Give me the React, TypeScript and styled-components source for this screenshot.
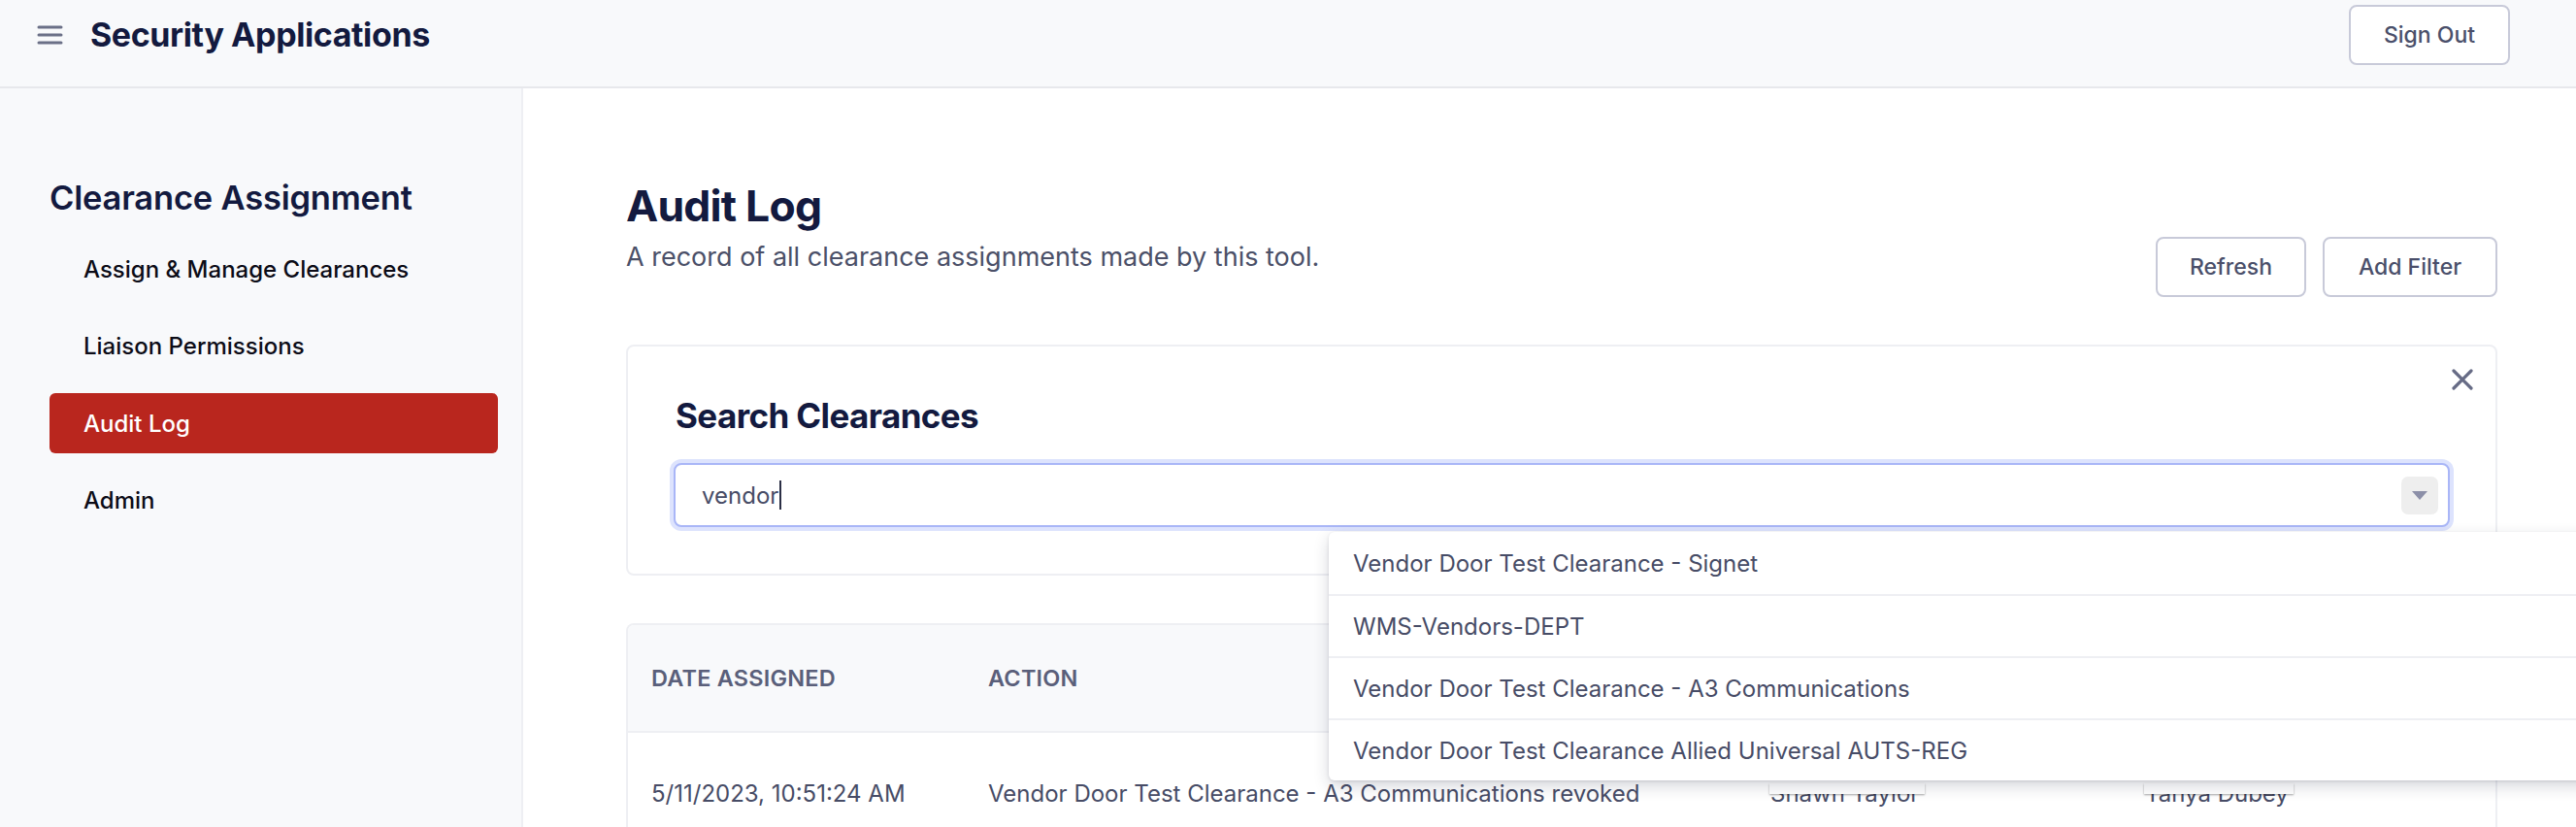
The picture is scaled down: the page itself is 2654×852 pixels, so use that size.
import React from "react";
import styled, { createGlobalStyle } from "styled-components";

const GlobalStyle = createGlobalStyle`
  html, body {
    margin: 0;
    padding: 0;
    overflow: hidden;
    background: #ffffff;
    font-family: Inter, "Noto Sans", Arial, sans-serif;
  }
  * { box-sizing: border-box; }
`;

const Page = styled.div`
  width: 2654px;
  height: 852px;
  display: flex;
  flex-direction: column;
  overflow: hidden;
`;

const TopBar = styled.header`
  height: 91px;
  flex: none;
  display: flex;
  align-items: flex-start;
  justify-content: space-between;
  padding: 5px 68px 0 37px;
  background: #f8f9fb;
  border-bottom: 2px solid #e7e8ec;
`;

const Brand = styled.div`
  height: 61px;
  display: flex;
  align-items: center;
  gap: 27px;
`;

const BrandTitle = styled.h1`
  margin: 0;
  font-size: 34px;
  font-weight: 700;
  letter-spacing: -0.4px;
  color: #131a3f;
`;

const OutlineButton = styled.button<{ $w: number }>`
  width: ${(p) => p.$w}px;
  height: 62px;
  background: #ffffff;
  border: 2px solid #c8cad9;
  border-radius: 8px;
  font-family: Inter, Arial, sans-serif;
  font-size: 23px;
  font-weight: 500;
  color: #4a4f6a;
  cursor: pointer;
`;

const Body = styled.div`
  flex: 1;
  display: flex;
  min-height: 0;
`;

const Sidebar = styled.aside`
  width: 539px;
  flex: none;
  background: #f8f9fb;
  border-right: 2px solid #eeeff3;
  padding: 91px 24px 0 51px;
`;

const SideTitle = styled.h2`
  margin: 0 0 21px 0;
  font-size: 34.5px;
  line-height: 43px;
  font-weight: 600;
  letter-spacing: -0.2px;
  color: #131a3f;
`;

const NavList = styled.nav`
  display: flex;
  flex-direction: column;
  gap: 17.5px;
`;

const NavItem = styled.div<{ $active?: boolean }>`
  height: 62px;
  display: flex;
  align-items: center;
  padding-left: 35px;
  border-radius: 6px;
  font-size: 24px;
  font-weight: 500;
  color: ${(p) => (p.$active ? "#ffffff" : "#0c0c17")};
  background: ${(p) => (p.$active ? "#b9261e" : "transparent")};
`;

const Main = styled.main`
  flex: 1;
  padding: 94px 81px 0 106px;
  display: flex;
  flex-direction: column;
`;

const TitleRow = styled.div`
  display: flex;
  justify-content: space-between;
  align-items: flex-end;
`;

const TitleBlock = styled.div`
  padding-bottom: 23px;
`;

const PageTitle = styled.h1`
  margin: 0;
  font-size: 44.5px;
  line-height: 55px;
  font-weight: 700;
  letter-spacing: -0.8px;
  color: #131a3f;
`;

const Subtitle = styled.p`
  margin: 7px 0 0 0;
  font-size: 27px;
  line-height: 36px;
  color: #4b5068;
`;

const Actions = styled.div`
  display: flex;
  gap: 17px;
`;

const Card = styled.section`
  position: relative;
  margin-top: 49px;
  border: 2px solid #eeeff3;
  border-radius: 8px;
  background: #ffffff;
`;

const SearchCard = styled(Card)`
  padding: 51px 47px 48px 47px;
  z-index: 2;
`;

const CloseButton = styled.button`
  position: absolute;
  top: 22px;
  right: 22px;
  width: 24px;
  height: 24px;
  padding: 0;
  border: none;
  background: none;
  display: flex;
  align-items: center;
  justify-content: center;
  cursor: pointer;
`;

const SearchTitle = styled.h2`
  margin: 0 0 28px 2px;
  font-size: 35px;
  line-height: 41px;
  font-weight: 700;
  letter-spacing: -0.6px;
  color: #131a3f;
`;

const InputWrap = styled.div`
  position: relative;
`;

const InputBox = styled.div`
  height: 66px;
  display: flex;
  align-items: center;
  justify-content: space-between;
  padding: 0 10px 0 27px;
  border: 2px solid #a9b6f7;
  border-radius: 8px;
  box-shadow: 0 0 0 4px #dde3fd;
  background: #ffffff;
`;

const InputText = styled.span`
  font-size: 24px;
  color: #474c66;
  display: flex;
  align-items: center;
`;

const Caret = styled.span`
  display: inline-block;
  width: 2px;
  height: 30px;
  background: #2b2f45;
  margin-left: 1px;
`;

const ToggleBox = styled.div`
  width: 38px;
  height: 39px;
  border-radius: 7px;
  background: #eeeeee;
  display: flex;
  align-items: center;
  justify-content: center;
`;

const Menu = styled.ul`
  position: absolute;
  top: calc(100% + 5px);
  left: 675px;
  width: 1400px;
  margin: 0;
  padding: 0;
  list-style: none;
  background: #ffffff;
  border-radius: 6px;
  box-shadow: 0 6px 16px rgba(30, 35, 60, 0.18), 0 1px 3px rgba(30, 35, 60, 0.12);
  z-index: 5;
`;

const MenuItem = styled.li`
  height: 64px;
  display: flex;
  align-items: center;
  padding-left: 25px;
  font-size: 24px;
  color: #474c66;
  & + & {
    border-top: 2px solid #eeeff3;
  }
`;

const TableCard = styled(Card)`
  overflow: hidden;
  flex: 1;
  border-bottom: none;
  border-bottom-left-radius: 0;
  border-bottom-right-radius: 0;
`;

const Row = styled.div<{ $head?: boolean }>`
  display: grid;
  grid-template-columns: 347px 806px 386px 1fr;
  align-items: center;
  height: ${(p) => (p.$head ? "111px" : "124px")};
  background: ${(p) => (p.$head ? "#f8f9fb" : "#ffffff")};
  border-bottom: ${(p) => (p.$head ? "2px solid #eeeff3" : "none")};
`;

const Cell = styled.div<{ $head?: boolean }>`
  position: relative;
  padding-left: 24px;
  white-space: nowrap;
  font-size: ${(p) => (p.$head ? "23.5px" : "24px")};
  font-weight: ${(p) => (p.$head ? 600 : 400)};
  text-transform: ${(p) => (p.$head ? "uppercase" : "none")};
  color: ${(p) => (p.$head ? "#5a5f7a" : "#474c66")};
  letter-spacing: ${(p) => (p.$head ? "0.2px" : "0")};
`;

const Redacted = styled.span<{ $w: number }>`
  position: relative;
  &::after {
    content: "";
    position: absolute;
    left: -1px;
    top: 4px;
    width: ${(p) => p.$w}px;
    height: 11px;
    background: #ffffff;
    box-shadow: 0 1px 2px rgba(0, 0, 0, 0.35);
  }
`;

const MenuIcon = () => (
  <svg width="29" height="24" viewBox="0 0 29 24" fill="none">
    <path d="M3 4h23M3 12h23M3 20h23" stroke="#6b7087" strokeWidth="3" strokeLinecap="round" />
  </svg>
);

const CloseIcon = () => (
  <svg width="24" height="24" viewBox="0 0 24 24" fill="none">
    <path d="M3 3l18 18M21 3L3 21" stroke="#666b85" strokeWidth="3.2" strokeLinecap="round" />
  </svg>
);

const TriangleIcon = () => (
  <svg width="16" height="9" viewBox="0 0 16 9">
    <path d="M0 0h16L8 9z" fill="#8c8fa8" />
  </svg>
);

const navItems = ["Assign & Manage Clearances", "Liaison Permissions", "Audit Log", "Admin"];
const options = [
  "Vendor Door Test Clearance - Signet",
  "WMS-Vendors-DEPT",
  "Vendor Door Test Clearance - A3 Communications",
  "Vendor Door Test Clearance Allied Universal AUTS-REG",
];

export default function App() {
  return (
    <Page>
      <GlobalStyle />
      <TopBar>
        <Brand>
          <MenuIcon />
          <BrandTitle>Security Applications</BrandTitle>
        </Brand>
        <OutlineButton $w={166}>Sign Out</OutlineButton>
      </TopBar>
      <Body>
        <Sidebar>
          <SideTitle>Clearance Assignment</SideTitle>
          <NavList>
            {navItems.map((n) => (
              <NavItem key={n} $active={n === "Audit Log"}>
                {n}
              </NavItem>
            ))}
          </NavList>
        </Sidebar>
        <Main>
          <TitleRow>
            <TitleBlock>
              <PageTitle>Audit Log</PageTitle>
              <Subtitle>A record of all clearance assignments made by this tool.</Subtitle>
            </TitleBlock>
            <Actions>
              <OutlineButton $w={155}>Refresh</OutlineButton>
              <OutlineButton $w={180}>Add Filter</OutlineButton>
            </Actions>
          </TitleRow>
          <SearchCard>
            <CloseButton aria-label="Close">
              <CloseIcon />
            </CloseButton>
            <SearchTitle>Search Clearances</SearchTitle>
            <InputWrap>
              <InputBox>
                <InputText>
                  vendor
                  <Caret />
                </InputText>
                <ToggleBox>
                  <TriangleIcon />
                </ToggleBox>
              </InputBox>
              <Menu>
                {options.map((o) => (
                  <MenuItem key={o}>{o}</MenuItem>
                ))}
              </Menu>
            </InputWrap>
          </SearchCard>
          <TableCard>
            <Row $head>
              <Cell $head>Date Assigned</Cell>
              <Cell $head>Action</Cell>
              <Cell $head />
              <Cell $head />
            </Row>
            <Row>
              <Cell>5/11/2023, 10:51:24 AM</Cell>
              <Cell>Vendor Door Test Clearance - A3 Communications revoked</Cell>
              <Cell>
                <Redacted $w={160}>Shawn Taylor</Redacted>
              </Cell>
              <Cell>
                <Redacted $w={154}>Tanya Dubey</Redacted>
              </Cell>
            </Row>
          </TableCard>
        </Main>
      </Body>
    </Page>
  );
}
